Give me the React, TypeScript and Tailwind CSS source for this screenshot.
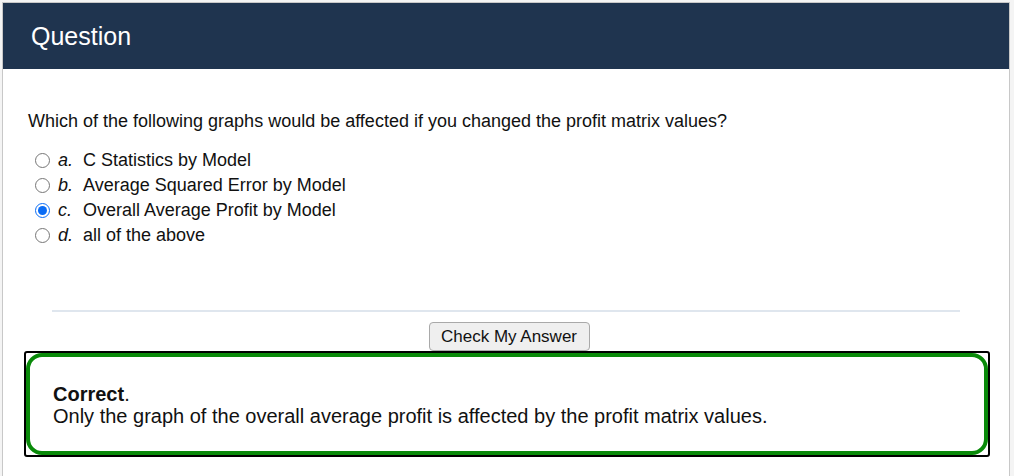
import React, { useState } from 'react';

const options = [
  { key: 'a', text: 'C Statistics by Model' },
  { key: 'b', text: 'Average Squared Error by Model' },
  { key: 'c', text: 'Overall Average Profit by Model' },
  { key: 'd', text: 'all of the above' },
];

export default function App() {
  const [picked, setPicked] = useState('c');

  return (
    <div className="w-[1014px] h-[476px] bg-[#f4f4f4] overflow-hidden font-['Liberation_Sans',Arial,sans-serif] text-[#111]">
      <div className="ml-[2px] mt-[2px] w-[1008px] h-[474px] bg-white border-l border-t border-r border-[#c8c8c8]">
        {/* header */}
        <div className="h-[66px] bg-[#1f344f] flex items-center pl-[28px]">
          <h1 className="text-white text-[25px] leading-none">Question</h1>
        </div>

        <div className="pl-[25px] pt-[42px]">
          <p className="text-[18px] leading-[20px]">Which of the following graphs would be affected if you changed the profit matrix values?</p>

          <div className="mt-[17px] flex flex-col">
            {options.map((o) => (
              <label key={o.key} className="flex items-center h-[25px] text-[18px] cursor-pointer">
                <input
                  type="radio"
                  name="q"
                  checked={picked === o.key}
                  onChange={() => setPicked(o.key)}
                  className="w-[15px] h-[15px] ml-[7px] mr-[8px] accent-[#0a6cf5]"
                />
                <span className="italic w-[25px]">{o.key}.</span>
                <span>{o.text}</span>
              </label>
            ))}
          </div>
        </div>

        <div className="mt-[62px] mx-[49px] h-[2px] bg-[#dfe6ee]"></div>

        <div className="flex justify-center mt-[10px] pl-[6px]">
          <button className="h-[29px] w-[161px] border border-[#a9a9a9] rounded-[4px] bg-[#efefef] text-[17px] leading-none">
            Check My Answer
          </button>
        </div>

        <div className="ml-[21px] w-[966px] h-[106px] border-2 border-black rounded-[3px]">
          <div className="h-full border-4 border-[#098a09] rounded-[16px] pl-[23px] pt-[26px]">
            <p className="text-[20px] leading-[22px]">
              <b>Correct</b>.
            </p>
            <p className="text-[20px] leading-[22px]">Only the graph of the overall average profit is affected by the profit matrix values.</p>
          </div>
        </div>
      </div>
    </div>
  );
}
